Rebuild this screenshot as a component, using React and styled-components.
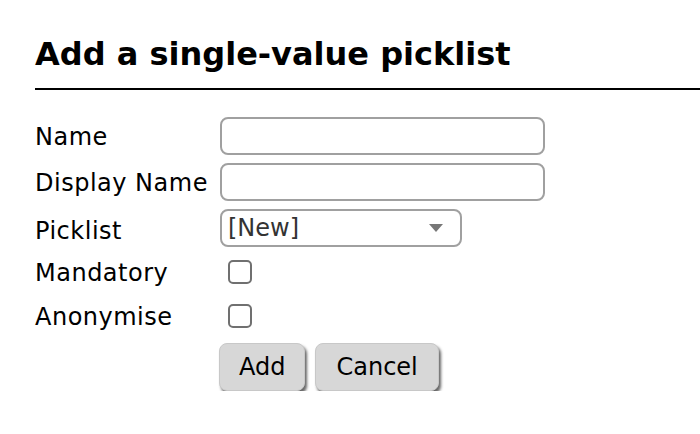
import styled, { createGlobalStyle } from "styled-components";

const Global = createGlobalStyle`
  body{
    margin: 0;
    background: #fff;
    font-family: "DejaVu Sans", Verdana, sans-serif;
    color: #000;
  }
`
const Page = styled.div`
  padding: 36px 0 0 35px;
`
const Title = styled.h1`
  margin: 0;
  padding: 0 0 16px;
  font-size: 32px;
  font-weight: 700;
  line-height: 36px;
  border-bottom: solid 2px #000;
`
const Form = styled.form`
  margin: 27px 0 0;
  display: grid;
  grid-template-columns: 185px auto;
  grid-template-rows: 38px 42px 38px 38px 38px auto;
  row-gap: 6px;
  align-items: center;
  justify-items: start;
`
const Label = styled.label`
  font-size: 24px;
  line-height: 30px;
  letter-spacing: 0.5px;
  margin: ${props=>props.low? "6px 0 0" : "2px 0 0"};
`
const TextInput = styled.input`
  box-sizing: border-box;
  width: 325px;
  height: 38px;
  border: solid 2px #a0a0a0;
  border-radius: 8px;
  font-size: 22px;
  font-family: inherit;
`
const Select = styled.div`
  box-sizing: border-box;
  width: 242px;
  height: 38px;
  padding: 0 0 0 6px;
  display: flex;
  align-items: center;
  justify-content: space-between;
  border: solid 2px #a0a0a0;
  border-radius: 8px;
  font-size: 24px;
  color: #333;
  & svg{
    margin: 0 16px 0 0;
  }
`
const CheckCell = styled.div`
  height: 38px;
  display: flex;
  align-items: center;
  padding: 0 0 0 8px;
`
const Check = styled.span`
  box-sizing: border-box;
  width: 24px;
  height: 24px;
  border: solid 2px #707070;
  border-radius: 5px;
`
const Buttons = styled.div`
  grid-column: 2;
  margin: 2px 0 0 -1px;
  display: flex;
  gap: 10px;
`
const Button = styled.button`
  height: 48px;
  padding: 0 ${props=>props.wide? "20px" : "19px"};
  font-family: inherit;
  font-size: 24px;
  color: #000;
  background: #d7d7d7;
  border: solid 1px #c8c8c8;
  border-radius: 8px;
  box-shadow: 2px 3px 3px rgba(0,0,0,0.6);
`

function App(){
  return(
    <Page>
      <Global />
      <Title>Add a single-value picklist</Title>
      <Form onSubmit={e=>e.preventDefault()}>
        <Label>Name</Label>
        <TextInput />
        <Label>Display Name</Label>
        <TextInput />
        <Label low>Picklist</Label>
        <Select>
          [New]
          <svg width="16" height="10" viewBox="0 0 16 10"><path d="M1 1h14L8 9z" fill="#777" /></svg>
        </Select>
        <Label>Mandatory</Label>
        <CheckCell><Check /></CheckCell>
        <Label>Anonymise</Label>
        <CheckCell><Check /></CheckCell>
        <Buttons>
          <Button>Add</Button>
          <Button wide>Cancel</Button>
        </Buttons>
      </Form>
    </Page>
  )
}
export default App;
